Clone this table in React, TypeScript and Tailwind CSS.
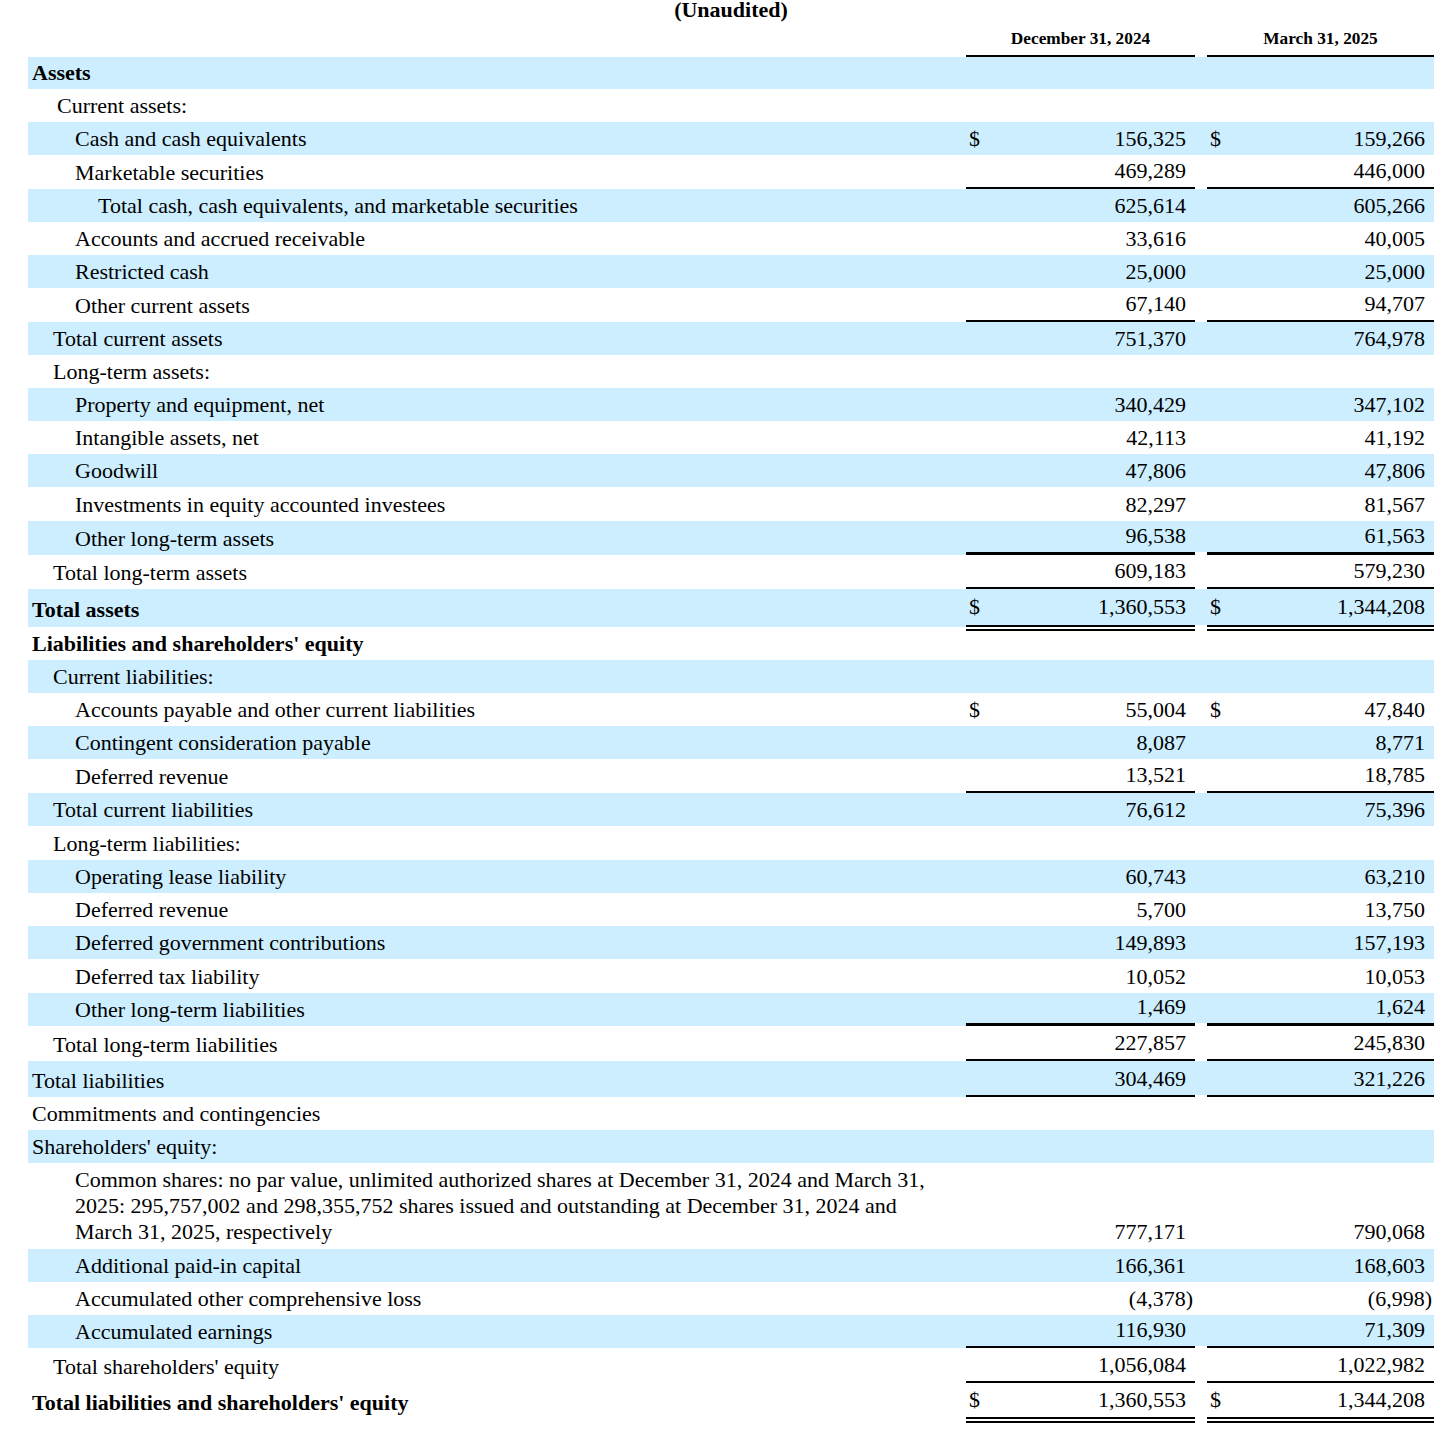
import React from 'react';

type Line = 'single' | 'thick' | 'double';

interface RowDef {
    label: React.ReactNode;
    pl: string;
    h: string;
    bold?: boolean;
    blue?: boolean;
    v1?: string;
    v2?: string;
    dollar?: boolean;
    line?: Line;
    valueH?: string;
    labelPb?: string;
    valuePb?: string;
}

const rows: RowDef[] = [
    { label: 'Assets', pl: 'pl-[4px]', h: 'h-[32px]', bold: true, blue: true },
    { label: 'Current assets:', pl: 'pl-[29px]', h: 'h-[33px]' },
    { label: 'Cash and cash equivalents', pl: 'pl-[47px]', h: 'h-[33px]', blue: true, v1: '156,325', v2: '159,266', dollar: true },
    { label: 'Marketable securities', pl: 'pl-[47px]', h: 'h-[34px]', v1: '469,289', v2: '446,000', line: 'single' },
    { label: 'Total cash, cash equivalents, and marketable securities', pl: 'pl-[70px]', h: 'h-[33px]', blue: true, v1: '625,614', v2: '605,266' },
    { label: 'Accounts and accrued receivable', pl: 'pl-[47px]', h: 'h-[33px]', v1: '33,616', v2: '40,005' },
    { label: 'Restricted cash', pl: 'pl-[47px]', h: 'h-[33px]', blue: true, v1: '25,000', v2: '25,000' },
    { label: 'Other current assets', pl: 'pl-[47px]', h: 'h-[34px]', v1: '67,140', v2: '94,707', line: 'single' },
    { label: 'Total current assets', pl: 'pl-[25px]', h: 'h-[33px]', blue: true, v1: '751,370', v2: '764,978' },
    { label: 'Long-term assets:', pl: 'pl-[25px]', h: 'h-[33px]' },
    { label: 'Property and equipment, net', pl: 'pl-[47px]', h: 'h-[33px]', blue: true, v1: '340,429', v2: '347,102' },
    { label: 'Intangible assets, net', pl: 'pl-[47px]', h: 'h-[33px]', v1: '42,113', v2: '41,192' },
    { label: 'Goodwill', pl: 'pl-[47px]', h: 'h-[33px]', blue: true, v1: '47,806', v2: '47,806' },
    { label: 'Investments in equity accounted investees', pl: 'pl-[47px]', h: 'h-[34px]', v1: '82,297', v2: '81,567' },
    { label: 'Other long-term assets', pl: 'pl-[47px]', h: 'h-[34px]', blue: true, v1: '96,538', v2: '61,563', line: 'thick' },
    { label: 'Total long-term assets', pl: 'pl-[25px]', h: 'h-[34px]', v1: '609,183', v2: '579,230', line: 'single' },
    {
        label: 'Total assets', pl: 'pl-[4px]', h: 'h-[38px]', bold: true, blue: true, v1: '1,360,553', v2: '1,344,208',
        dollar: true, line: 'double', valueH: 'h-[42px]', labelPb: 'pb-[4px]', valuePb: 'pb-[5px]',
    },
    { label: "Liabilities and shareholders' equity", pl: 'pl-[4px]', h: 'h-[33px]', bold: true },
    { label: 'Current liabilities:', pl: 'pl-[25px]', h: 'h-[33px]', blue: true },
    { label: 'Accounts payable and other current liabilities', pl: 'pl-[47px]', h: 'h-[33px]', v1: '55,004', v2: '47,840', dollar: true },
    { label: 'Contingent consideration payable', pl: 'pl-[47px]', h: 'h-[33px]', blue: true, v1: '8,087', v2: '8,771' },
    { label: 'Deferred revenue', pl: 'pl-[47px]', h: 'h-[34px]', v1: '13,521', v2: '18,785', line: 'single' },
    { label: 'Total current liabilities', pl: 'pl-[25px]', h: 'h-[33px]', blue: true, v1: '76,612', v2: '75,396' },
    { label: 'Long-term liabilities:', pl: 'pl-[25px]', h: 'h-[34px]' },
    { label: 'Operating lease liability', pl: 'pl-[47px]', h: 'h-[33px]', blue: true, v1: '60,743', v2: '63,210' },
    { label: 'Deferred revenue', pl: 'pl-[47px]', h: 'h-[33px]', v1: '5,700', v2: '13,750' },
    { label: 'Deferred government contributions', pl: 'pl-[47px]', h: 'h-[33px]', blue: true, v1: '149,893', v2: '157,193' },
    { label: 'Deferred tax liability', pl: 'pl-[47px]', h: 'h-[34px]', v1: '10,052', v2: '10,053' },
    { label: 'Other long-term liabilities', pl: 'pl-[47px]', h: 'h-[33px]', blue: true, v1: '1,469', v2: '1,624', line: 'thick' },
    { label: 'Total long-term liabilities', pl: 'pl-[25px]', h: 'h-[35px]', v1: '227,857', v2: '245,830', line: 'single' },
    { label: 'Total liabilities', pl: 'pl-[4px]', h: 'h-[36px]', blue: true, v1: '304,469', v2: '321,226', line: 'single' },
    { label: 'Commitments and contingencies', pl: 'pl-[4px]', h: 'h-[33px]' },
    { label: "Shareholders' equity:", pl: 'pl-[4px]', h: 'h-[33px]', blue: true },
    {
        label: (
            <>
                Common shares: no par value, unlimited authorized shares at December 31, 2024 and March 31,
                <br />
                2025: 295,757,002 and 298,355,752 shares issued and outstanding at December 31, 2024 and
                <br />
                March 31, 2025, respectively
            </>
        ),
        pl: 'pl-[47px]', h: 'h-[86px]', v1: '777,171', v2: '790,068', labelPb: 'pb-[4px]', valuePb: 'pb-[4px]',
    },
    { label: 'Additional paid-in capital', pl: 'pl-[47px]', h: 'h-[33px]', blue: true, v1: '166,361', v2: '168,603' },
    { label: 'Accumulated other comprehensive loss', pl: 'pl-[47px]', h: 'h-[33px]', v1: '(4,378)', v2: '(6,998)' },
    { label: 'Accumulated earnings', pl: 'pl-[47px]', h: 'h-[33px]', blue: true, v1: '116,930', v2: '71,309', line: 'single' },
    { label: "Total shareholders' equity", pl: 'pl-[25px]', h: 'h-[35px]', v1: '1,056,084', v2: '1,022,982', line: 'single' },
    {
        label: "Total liabilities and shareholders' equity", pl: 'pl-[4px]', h: 'h-[42px]', bold: true, v1: '1,360,553', v2: '1,344,208',
        dollar: true, line: 'double', valueH: 'h-[40px]', labelPb: 'pb-[9px]', valuePb: 'pb-[4px]',
    },
];

const lineCls: Record<Line, string> = {
    single: 'border-b-2 border-black',
    thick: 'border-b-[3px] border-black',
    double: 'border-b-[6px] border-double border-black',
};

const gapLineCls: Record<Line, string> = {
    single: 'border-b-2 border-transparent',
    thick: 'border-b-[3px] border-transparent',
    double: 'border-b-[6px] border-transparent',
};

function Num({ v }: { v?: string }) {
    if (!v) return null;
    if (v.startsWith('(')) {
        return (
            <span>
                {v.slice(0, -1)}
                <span className="mr-[-7px]">)</span>
            </span>
        );
    }
    return <span>{v}</span>;
}

function Row({ r }: { r: RowDef }) {
    const bg = r.blue ? 'bg-[#cceeff] bg-clip-padding' : '';
    const line = r.line ? lineCls[r.line] : '';
    const gapLine = r.line ? gapLineCls[r.line] : '';
    const sized = r.valueH ? `self-start ${r.valueH}` : '';
    const vpb = r.valuePb ?? 'pb-[3px]';

    return (
        <div className={`flex ${r.h}`}>
            <div className={`flex-1 flex items-end ${r.pl} pr-[30px] ${r.labelPb ?? 'pb-[3px]'} ${r.blue ? 'bg-[#cceeff]' : ''} ${r.bold ? 'font-bold' : ''}`}>
                <div>{r.label}</div>
            </div>
            <div className={`w-[229px] flex items-end justify-between pl-[3px] pr-[9px] ${vpb} ${bg} ${line} ${sized}`}>
                <span>{r.dollar ? '$' : ''}</span>
                <Num v={r.v1} />
            </div>
            <div className={`w-[12px] ${bg} ${gapLine} ${sized}`}></div>
            <div className={`w-[227px] flex items-end justify-between pl-[3px] pr-[9px] ${vpb} ${bg} ${line} ${sized}`}>
                <span>{r.dollar ? '$' : ''}</span>
                <Num v={r.v2} />
            </div>
        </div>
    );
}

export default function App() {
    return (
        <div className="min-h-[1438px] bg-white pl-[28px] pr-[22px] font-['Liberation_Serif',serif] text-black">
            <div className="text-center text-[22px] leading-[19px] font-bold">(Unaudited)</div>

            {/* column headings */}
            <div className="flex h-[38px] text-[17.3px] leading-[20px] font-bold">
                <div className="flex-1"></div>
                <div className="w-[229px] flex items-end justify-center pb-[6px] border-b-2 border-black">December 31, 2024</div>
                <div className="w-[12px]"></div>
                <div className="w-[227px] flex items-end justify-center pb-[6px] border-b-2 border-black">March 31, 2025</div>
            </div>

            <div className="text-[22px] leading-[26px]">
                {rows.map((r, i) => (
                    <Row key={i} r={r} />
                ))}
            </div>
        </div>
    );
}
